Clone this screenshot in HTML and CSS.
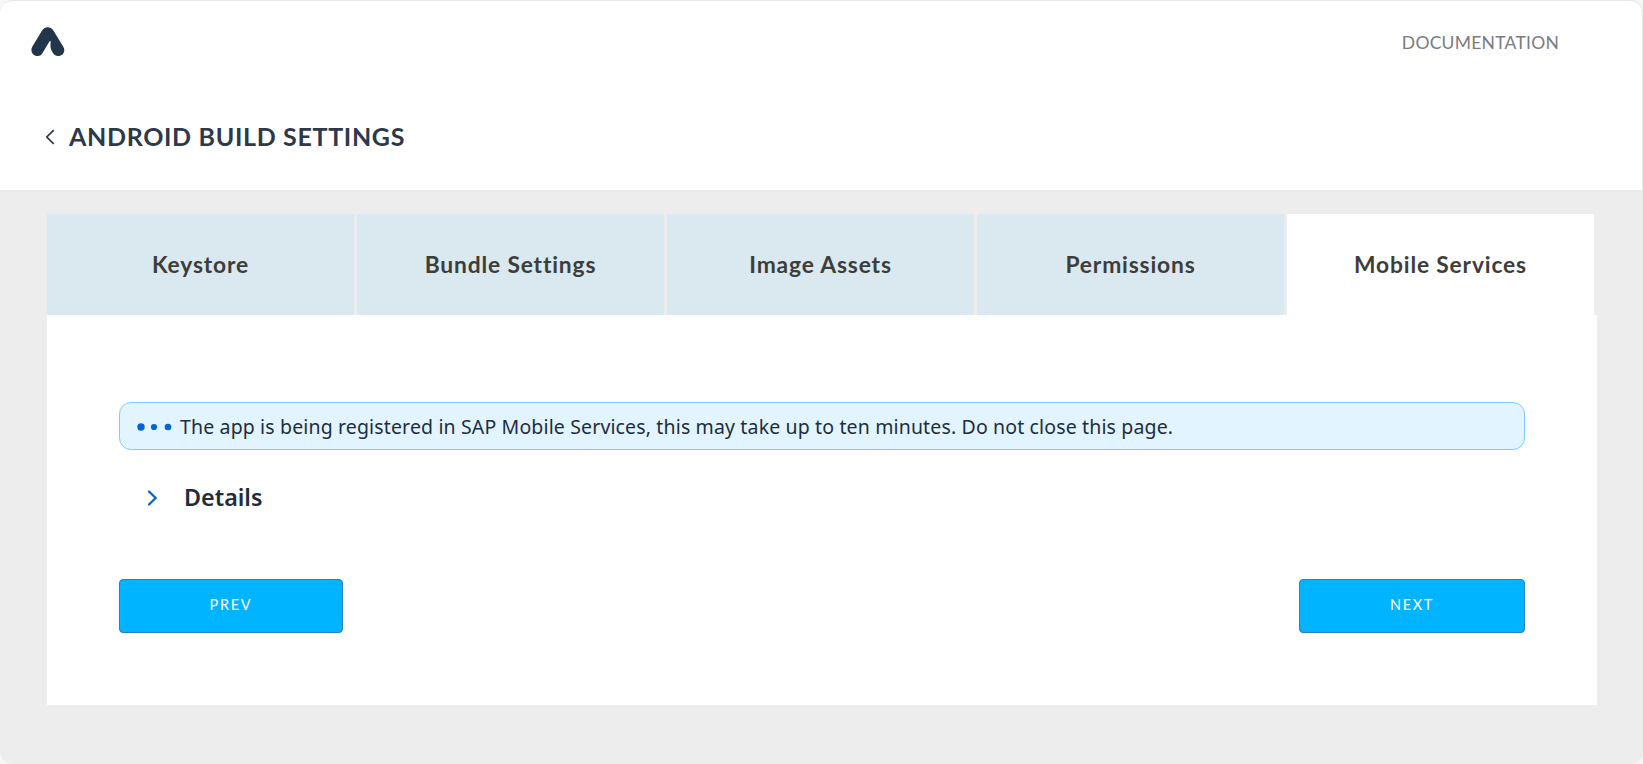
FILE: index.html
```html
<!DOCTYPE html>
<html lang="en">
<head>
<meta charset="utf-8">
<title>Android Build Settings</title>
<link rel="stylesheet" href="styles.css">
</head>
<body>
<div class="window">
  <header class="header">
    <div class="topbar">
      <svg class="logo" width="34" height="30" viewBox="0 0 34 30"><path fill="#22364a" d="M11.200 3.200C14 -.9 19.600 -.9 22.200 3.200L32.300 19.800C35 24.500 31.800 29.100 27.200 29.100C24.600 29.100 22.700 27.600 21.500 25.300C19.300 21.400 19.200 19.500 19.700 14.900C19.600 13.500 18.900 13.900 18.400 14.600L11.700 25.800C10.500 27.900 8.800 29.100 6.700 29.100C1.500 29.100 -1.200 24 1.400 19.500Z"/></svg>
      <a class="doc-link">DOCUMENTATION</a>
    </div>
    <div class="title-row">
      <svg class="back" width="10" height="16" viewBox="0 0 10 16"><path d="M8.700 1.200L1.800 8L8.700 14.800" fill="none" stroke="#2b3848" stroke-width="1.700"/></svg>
      <h1 class="title"><span>ANDROID BUILD SETTINGS</span></h1>
    </div>
  </header>
  <main class="main">
    <nav class="tabs">
      <a class="tab"><span>Keystore</span></a>
      <a class="tab"><span>Bundle Settings</span></a>
      <a class="tab"><span>Image Assets</span></a>
      <a class="tab"><span>Permissions</span></a>
      <a class="tab tab-active"><span>Mobile Services</span></a>
    </nav>
    <section class="panel">
      <div class="notice">
        <svg class="dots" width="36" height="10" viewBox="0 0 36 10" fill="#0064d9"><circle cx="5" cy="5" r="3.700"/><circle cx="18" cy="5" r="3.100"/><circle cx="32" cy="5" r="3.300"/></svg>
        <span class="notice-text">The app is being registered in SAP Mobile Services, this may take up to ten minutes. Do not close this page.</span>
      </div>
      <div class="details">
        <svg width="12" height="18" viewBox="0 0 12 18"><path d="M2 2.500L8.700 9L2 15.500" fill="none" stroke="#0064d9" stroke-width="2.300" stroke-linecap="round" stroke-linejoin="round"/></svg>
        <span class="details-label">Details</span>
      </div>
      <div class="actions">
        <button class="button prev">PREV</button>
        <button class="button next">NEXT</button>
      </div>
    </section>
  </main>
</div>
</body>
</html>
```
FILE: styles.css
```css
* { box-sizing: border-box; }
body { margin: 0; background: #f6f6f6; font-family: Lato, "Liberation Sans", sans-serif; }
.window { height: 764px; border: 1px solid #e8e8e8; border-left-width: 0; border-bottom: 0; border-radius: 13px; background: #ededed; overflow: hidden; }
.header { height: 189px; background: #fff; }
.topbar { display: flex; justify-content: space-between; align-items: flex-start; height: 96px; padding: 26px 83px 0 31px; }
.logo { display: block; }
.doc-link { padding-top: 5px; font-size: 17.5px; line-height: 22px; letter-spacing: 0.25px; color: #7b7b83; }
.title-row { display: flex; align-items: center; height: 80px; padding-left: 45px; gap: 14px; }
.title { margin: 0; padding-bottom: 2px; font-size: 25px; line-height: 32px; font-weight: 700; letter-spacing: 0.67px; color: #2d384a; }
.main { padding: 24px 45px 0 47px; }
.tabs { display: flex; gap: 3px; height: 101px; }
.tab { display: flex; align-items: center; justify-content: center; width: 307px; padding-bottom: 1px; background: #dae8ef; color: #3d3e3b; font-size: 22.8px; font-weight: 700; letter-spacing: 0.84px; }
.tab-active { background: #fff; }
.panel { width: 1550px; height: 390px; padding: 87px 72px 0; background: #fff; }
.notice { display: flex; align-items: center; height: 48px; padding: 1px 0 0 16px; gap: 8px; border: 1px solid #7acfff; border-radius: 12px; background: #e1f4ff; }
.notice-text { font-family: "Noto Sans", sans-serif; font-size: 19.5px; letter-spacing: 0.145px; color: #1d2d3e; white-space: nowrap; }
.details { display: flex; align-items: center; gap: 25px; height: 96px; padding: 0 0 1px 28px; }
.details-label { padding-bottom: 1px; font-family: "Noto Sans", sans-serif; font-size: 23.3px; font-weight: 600; color: #1d2d3e; }
.actions { display: flex; justify-content: space-between; padding-top: 33px; }
.button { height: 54px; padding: 0 0 3px; border: 1px solid #2a7fc4; border-radius: 4px; background: #00b4ff; color: #fff; font: 14.5px Lato, sans-serif; letter-spacing: 1.7px; }
.prev { width: 224px; }
.next { width: 226px; }
```
